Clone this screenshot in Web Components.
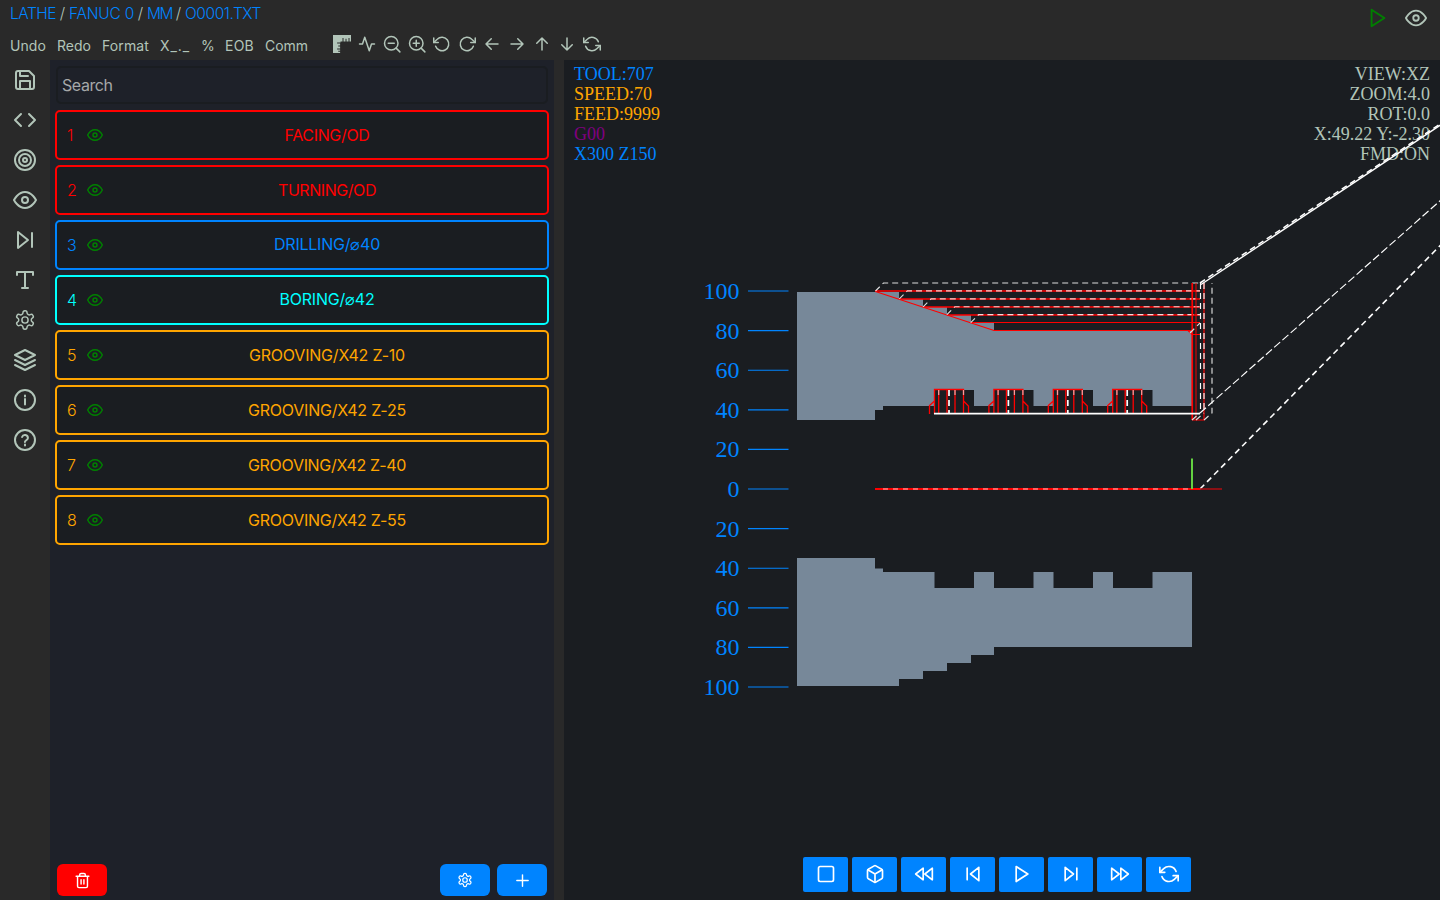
<!DOCTYPE html>
<html lang="en">
<head>
<meta charset="utf-8">
<title>Lathe editor</title>
<style>
html,body{margin:0;height:100%;background:#292929;overflow:hidden}
</style>
</head>
<body>
<lathe-app></lathe-app>
<script>
const ICONS = {
  save:'<path d="M19 21H5a2 2 0 0 1-2-2V5a2 2 0 0 1 2-2h11l5 5v11a2 2 0 0 1-2 2z"/><path d="M17 21v-8H7v8M7 3v5h8"/>',
  code:'<path d="m16 18 6-6-6-6M8 6l-6 6 6 6"/>',
  target:'<circle cx="12" cy="12" r="10"/><circle cx="12" cy="12" r="6"/><circle cx="12" cy="12" r="2"/>',
  eye:'<path d="M1 12s4-8 11-8 11 8 11 8-4 8-11 8-11-8-11-8z"/><circle cx="12" cy="12" r="3"/>',
  next:'<path d="m5 4 10 8-10 8zM19 5v14"/>',
  prev:'<path d="M19 20 9 12l10-8zM5 19V5"/>',
  type:'<path d="M4 7V4h16v3M9 20h6M12 4v16"/>',
  gear:'<path d="M12.22 2h-.44a2 2 0 0 0-2 2v.18a2 2 0 0 1-1 1.73l-.43.25a2 2 0 0 1-2 0l-.15-.08a2 2 0 0 0-2.73.73l-.22.38a2 2 0 0 0 .73 2.73l.15.1a2 2 0 0 1 1 1.72v.51a2 2 0 0 1-1 1.74l-.15.09a2 2 0 0 0-.73 2.73l.22.38a2 2 0 0 0 2.73.73l.15-.08a2 2 0 0 1 2 0l.43.25a2 2 0 0 1 1 1.73V20a2 2 0 0 0 2 2h.44a2 2 0 0 0 2-2v-.18a2 2 0 0 1 1-1.73l.43-.25a2 2 0 0 1 2 0l.15.08a2 2 0 0 0 2.73-.73l.22-.39a2 2 0 0 0-.73-2.73l-.15-.08a2 2 0 0 1-1-1.74v-.5a2 2 0 0 1 1-1.74l.15-.09a2 2 0 0 0 .73-2.73l-.22-.38a2 2 0 0 0-2.73-.73l-.15.08a2 2 0 0 1-2 0l-.43-.25a2 2 0 0 1-1-1.73V4a2 2 0 0 0-2-2z"/><circle cx="12" cy="12" r="3.4"/>',
  layers:'<path d="M12 2 2 7l10 5 10-5zM2 17l10 5 10-5M2 12l10 5 10-5"/>',
  info:'<circle cx="12" cy="12" r="10"/><path d="M12 16.5V11M12 7.4v1.2"/>',
  help:'<circle cx="12" cy="12" r="10"/><path d="M9.09 9a3 3 0 0 1 5.83 1c0 2-3 2.4-3 4M12 16.4v1.2"/>',
  ruler:'<path fill="currentColor" stroke="none" d="M0 0h24v8.500H22V4h-1.300v4.500H18V5h-1.300v3.500H14V4h-1.300v4.500H10V10H5.500v1.300H9.500V14H7v1.300h2.500V18H5.500v1.300H9.500V21H7v1.300h2.500V24H0z"/>',
  activity:'<path d="M22 12h-4l-3 9L9 3l-3 9H2"/>',
  zoomout:'<circle cx="11" cy="11" r="9"/><path d="m22.500 22.500-5-5M7 11h8"/>',
  zoomin:'<circle cx="11" cy="11" r="9"/><path d="m22.500 22.500-5-5M7 11h8M11 7v8"/>',
  ccw:'<path d="M1 4v6h6"/><path d="M3.510 15a9 9 0 1 0 2.130-9.360L1 10"/>',
  cw:'<path d="M23 4v6h-6"/><path d="M20.490 15a9 9 0 1 1-2.120-9.360L23 10"/>',
  left:'<path d="M20 12H4M11 19l-7-7 7-7"/>',
  right:'<path d="M4 12h16M13 5l7 7-7 7"/>',
  up:'<path d="M12 20V4M5 11l7-7 7 7"/>',
  down:'<path d="M12 4v16M19 13l-7 7-7-7"/>',
  refresh:'<path d="M1 4v6h6M23 20v-6h-6"/><path d="M20.490 9A9 9 0 0 0 5.640 5.640L1 10m22 4-4.640 4.360A9 9 0 0 1 3.510 15"/>',
  play:'<path d="m5 3 14 9-14 9z"/>',
  square:'<rect x="3" y="3" width="18" height="18" rx="2"/>',
  box:'<path d="M21 16V8a2 2 0 0 0-1-1.730l-7-4a2 2 0 0 0-2 0l-7 4A2 2 0 0 0 3 8v8a2 2 0 0 0 1 1.730l7 4a2 2 0 0 0 2 0l7-4A2 2 0 0 0 21 16z"/><path d="M3.270 6.960 12 12.010l8.730-5.050M12 22.080V12"/>',
  rewind:'<path d="m11 19-9-7 9-7zM22 19l-9-7 9-7z"/>',
  forward:'<path d="m13 19 9-7-9-7zM2 19l9-7-9-7z"/>',
  trash:'<path d="M3 6h18M19 6v14a2 2 0 0 1-2 2H7a2 2 0 0 1-2-2V6m3 0V4a2 2 0 0 1 2-2h4a2 2 0 0 1 2 2v2M10 11v6M14 11v6"/>',
  plus:'<path d="M12 4v16M4 12h16"/>'
};
function define(name, render, after){
  customElements.define(name, class extends HTMLElement{
    connectedCallback(){
      if(this.shadowRoot) return;
      this.attachShadow({mode:'open'}).innerHTML = render(this);
      if(after) after(this);
    }
  });
}
const at = (el,n,d) => el.getAttribute(n) || d;

define('ui-icon', el => `<style>:host{display:block;flex:none;width:${at(el,'size',24)}px;height:${at(el,'size',24)}px}svg{display:block;overflow:visible}</style>
<svg width="${at(el,'size',24)}" height="${at(el,'size',24)}" viewBox="0 0 24 24" fill="none" stroke="currentColor" stroke-width="${at(el,'weight',2)}" stroke-linecap="round" stroke-linejoin="round">${ICONS[at(el,'name')]}</svg>`);

/* A single line of text tracked so that it fills the width given in "w". */
define('ui-label', () => `<style>:host{display:block;flex:none;white-space:pre}span{display:inline-block}</style><span><slot></slot></span>`, el => {
  const w = parseFloat(at(el,'w','0'));
  if(!w) return;
  el.style.width = w + 'px';
  const s = el.shadowRoot.querySelector('span');
  s.style.letterSpacing = (w - s.getBoundingClientRect().width) / el.textContent.length + 'px';
});

define('crumb-bar', () => `<style>
:host{display:flex;height:28px;padding:0 0 1px 10px;box-sizing:border-box;align-items:center;font:300 15.5px/20px Inter,"Liberation Sans",sans-serif;color:#0084ff}
i{font-style:normal;color:#b2c5b9;width:13px;text-align:center;flex:none}
</style><ui-label w="46">LATHE</ui-label><i>/</i><ui-label w="65">FANUC 0</ui-label><i>/</i><ui-label w="25">MM</ui-label><i>/</i><ui-label w="76">O0001.TXT</ui-label>`);

define('tool-bar', () => `<style>
:host{display:flex;height:32px;box-sizing:border-box;align-items:center;padding-left:10px;font:400 14px/20px Inter,"Liberation Sans",sans-serif;color:#b2c5b9}
.t{display:flex;gap:11px;width:323px;padding-top:4px}
.i{display:flex;gap:7px}
</style><div class="t"><ui-label w="36">Undo</ui-label><ui-label w="34">Redo</ui-label><ui-label w="47">Format</ui-label><ui-label w="30">X_._</ui-label><ui-label w="13">%</ui-label><ui-label w="29">EOB</ui-label><ui-label w="43">Comm</ui-label></div>
<div class="i">${['ruler','activity','zoomout','zoomin','ccw','cw','left','right','up','down','refresh'].map(n=>`<ui-icon name="${n}" size="18"></ui-icon>`).join('')}</div>`);

define('app-header', () => `<style>
:host{display:flex;justify-content:space-between;height:60px;background:#292929}
.r{display:flex;gap:16px;padding:7px 13px 0 0;color:#b2c5b9}
.g{color:#008000}
</style><div><crumb-bar></crumb-bar><tool-bar></tool-bar></div>
<div class="r"><ui-icon class="g" name="play" size="22"></ui-icon><ui-icon name="eye" size="22"></ui-icon></div>`);

define('side-rail', () => `<style>
:host{display:flex;flex-direction:column;align-items:center;gap:16px;padding-top:8px;width:50px;box-sizing:border-box;background:#292929;color:#b2c5b9}
</style>${['save','code','target','eye','next','type','gear','layers','info','help'].map(n=>`<ui-icon name="${n}" weight="${n=='gear'?1.6:2}" size="${n=='gear'?22:24}" style="margin:${n=='gear'?1:0}px"></ui-icon>`).join('')}`);

define('op-card', el => `<style>
:host{display:flex;align-items:center;height:50px;box-sizing:border-box;border:2px solid ${at(el,'color')};border-radius:5px;background:#1a1d21;color:${at(el,'color')};font:400 16px/20px Inter,"Liberation Sans",sans-serif;padding:0 10px}
b{font-weight:300;width:20px}
.e{color:#008000}
.m{flex:1;display:flex;justify-content:center;padding:0 0 ${at(el,'lift',0)}px 14px}
.d{font-weight:200}
</style><b>${at(el,'n')}</b><ui-icon class="e" name="eye" size="16" weight="2.2"></ui-icon><div class="m"><ui-label w="${at(el,'w')}">${at(el,'label').replace('⌀','<span class="d">⌀</span>')}</ui-label></div>`);

define('ui-button', el => `<style>
:host{display:flex;align-items:center;justify-content:center;box-sizing:border-box;width:${at(el,'w',50)}px;height:${at(el,'h',32)}px;border-radius:${at(el,'r',6)}px;background:${at(el,'color','#0084ff')};color:#fff;padding-bottom:${at(el,'pad',0)}px}
</style><slot></slot>`);

define('op-panel', () => `<style>
:host{display:flex;flex-direction:column;width:504px;box-sizing:border-box;padding:6px 5px 4px;background:#1e2129}
.s{height:38px;margin:0 1px 6px;box-sizing:border-box;border:2px solid #1a1d21;border-radius:5px;display:flex;align-items:center;padding-left:4px;font:400 16px/20px Inter,"Liberation Sans",sans-serif;color:#a6a8a9}
.l{display:flex;flex-direction:column;gap:5px;flex:1}
.f{display:flex;gap:7px;padding:0 2px}
.f>:first-child{margin-right:auto}
</style><div class="s"><ui-label w="50.500">Search</ui-label></div>
<div class="l">${[['FACING/OD','red',85],['TURNING/OD','red',98],['DRILLING/⌀40','#0084ff',106],['BORING/⌀42','cyan',95],['GROOVING/X42 Z-10','orange',156],['GROOVING/X42 Z-25','orange',158],['GROOVING/X42 Z-40','orange',158],['GROOVING/X42 Z-55','orange',158]].map((o,i)=>`<op-card n="${i+1}" label="${o[0]}" color="${o[1]}" w="${o[2]}" lift="${o[0].includes('⌀')?2:0}"></op-card>`).join('')}</div>
<div class="f"><ui-button color="red"><ui-icon name="trash" size="17"></ui-icon></ui-button><ui-button><ui-icon name="gear" size="16" weight="1.8"></ui-icon></ui-button><ui-button><ui-icon name="plus" size="17"></ui-icon></ui-button></div>`);

function drawing(){
  const line = (x1,y1,x2,y2,c='red',extra='') => `<path d="M${x1} ${y1}L${x2} ${y2}" stroke="${c}" ${extra}/>`;
  const dash = 'stroke-dasharray="6 4"';
  let s = '';
  for(let i=-5;i<=5;i++){
    const y = 489 + i*39.6;
    s += line(748,y,788.5,y,'#0084ff');
    s += `<text x="739.500" y="${y+8}" text-anchor="end">${Math.abs(i)*20}</text>`;
  }
  s += '<path stroke="none" fill="#778899" d="M797 292H899V299H923V307H947V315H971V323H994V331H1192V406H1152.500V390H1113V406H1093V390H1053.500V406H1033.500V390H994V406H974V390H934.500V406H883V410H875V420H797Z"/>';
  s += '<path stroke="none" fill="#778899" d="M797 686H899V679H923V671H947V663H971V655H994V647H1192V572H1152.500V588H1113V572H1093V588H1053.500V572H1033.500V588H994V572H974V588H934.500V572H883V568.500H875V558H797Z"/>';
  s += '<path d="M875.500 291.500 994 330.500H1192M1188 330.500l4 4h8"/>';
  [291,299,307,315].forEach((y,i)=>{ s += line(875+i*24,y,1200,y,'red','stroke-width="1.3"'); });
  s += line(971,322.5,1200,322.5);
  for(let i=0;i<5;i++){
    const x = 875.5+i*23.8, y = 291+i*7.9;
    s += `<path d="M${x} ${y}l8 -8H1200" stroke="#fff" ${dash} opacity=".85"/>`;
  }
  s += '<path d="M1192.500 283V420H1204V283" /><path d="M1196 283V420" opacity=".8"/><path d="M1192 283V420" />';
  s += `<path d="M1200.500 283V413M1204 283V413" stroke="#fff" ${dash}/><path d="M1192 420l8-7M1196 420l8-7M1204 420l8-7V283M1190 333l10-10" stroke="#ddd" ${dash}/>`;
  for(let i=0;i<4;i++){
    s += `<g stroke-width="1.300" transform="translate(${i*59.4} 0)"><path d="M929.500 414V405.500L934.500 401M963.500 401l5 5V414M934.500 414V389.500H963.500V414M934.500 390V414M938.700 390V414M947 390V414M955 390V414"/><path d="M949 390V413" stroke="#fff" stroke-width="1.700" ${dash}/><path d="M938.700 390v5M955 390v5M963.500 390v5" stroke="#fff" opacity=".6"/></g>`;
  }
  s += line(934,413.7,1200,413.7,'#fff','stroke-width="1.7"');
  s += line(1200,283,1786,-105,'#fff','stroke-width="1.5" '+dash);
  s += line(1201,284.5,1786,-105,'#fff','stroke-width="1.4"');
  s += line(1200,413,1786,-105,'#fff','stroke-width="1.15" stroke-dasharray="8 3"');
  s += line(1200,489,1786,-105,'#fff','stroke-width="1.6" stroke-dasharray="6 4"');
  s += line(875,489,1200,489,'red','stroke-width="1.9"') + line(1200,489,1222,489,'#b00c10','stroke-width="1.5"');
  s += line(883,489,1192,489,'#fff','stroke-dasharray="5 5" opacity=".75"');
  s += line(1192,458.5,1192,489,'#68dc44','stroke-width="1.9"');
  return s;
}
define('lathe-view', () => `<style>
:host{display:grid;position:relative;background:#1a1d21;overflow:hidden;font:18px/20px "Liberation Serif",serif}
:host>*{grid-area:1/1}
svg{display:block;width:876px;height:840px}
svg text{fill:#0084ff;stroke:none;font:24px "Liberation Serif",serif}
.h{display:flex;justify-content:space-between;padding:4px 10px;color:#b2c5b9}
.h div{display:flex;flex-direction:column}
.r{align-items:flex-end}
.b{display:flex;gap:4px;align-self:end;justify-self:center;padding:0 10px 8px 0}
</style>
<div class="h"><div><ui-label style="color:#0084ff">TOOL:707</ui-label><ui-label style="color:orange">SPEED:70</ui-label><ui-label style="color:orange">FEED:9999</ui-label><ui-label style="color:purple">G00</ui-label><ui-label style="color:#0084ff">X300 Z150</ui-label></div>
<div class="r"><ui-label>VIEW:XZ</ui-label><ui-label>ZOOM:4.0</ui-label><ui-label>ROT:0.0</ui-label><ui-label>X:49.22 Y:-2.30</ui-label><ui-label>FMD:ON</ui-label></div></div>
<svg viewBox="564 60 876 840" fill="none" stroke="red" stroke-width="1.15">${drawing()}</svg>
<div class="b">${['square','box','rewind','prev','play','next','forward','refresh'].map(n=>`<ui-button w="45" h="35" r="2" pad="2"><ui-icon name="${n}" size="20"></ui-icon></ui-button>`).join('')}</div>`);

define('lathe-app', () => `<style>
:host{display:flex;flex-direction:column;width:1440px;height:900px;background:#292929}
main{display:flex;flex:1;min-height:0}
lathe-view{flex:1;margin-left:10px}
</style><app-header></app-header><main><side-rail></side-rail><op-panel></op-panel><lathe-view></lathe-view></main>`);
</script>
</body>
</html>
